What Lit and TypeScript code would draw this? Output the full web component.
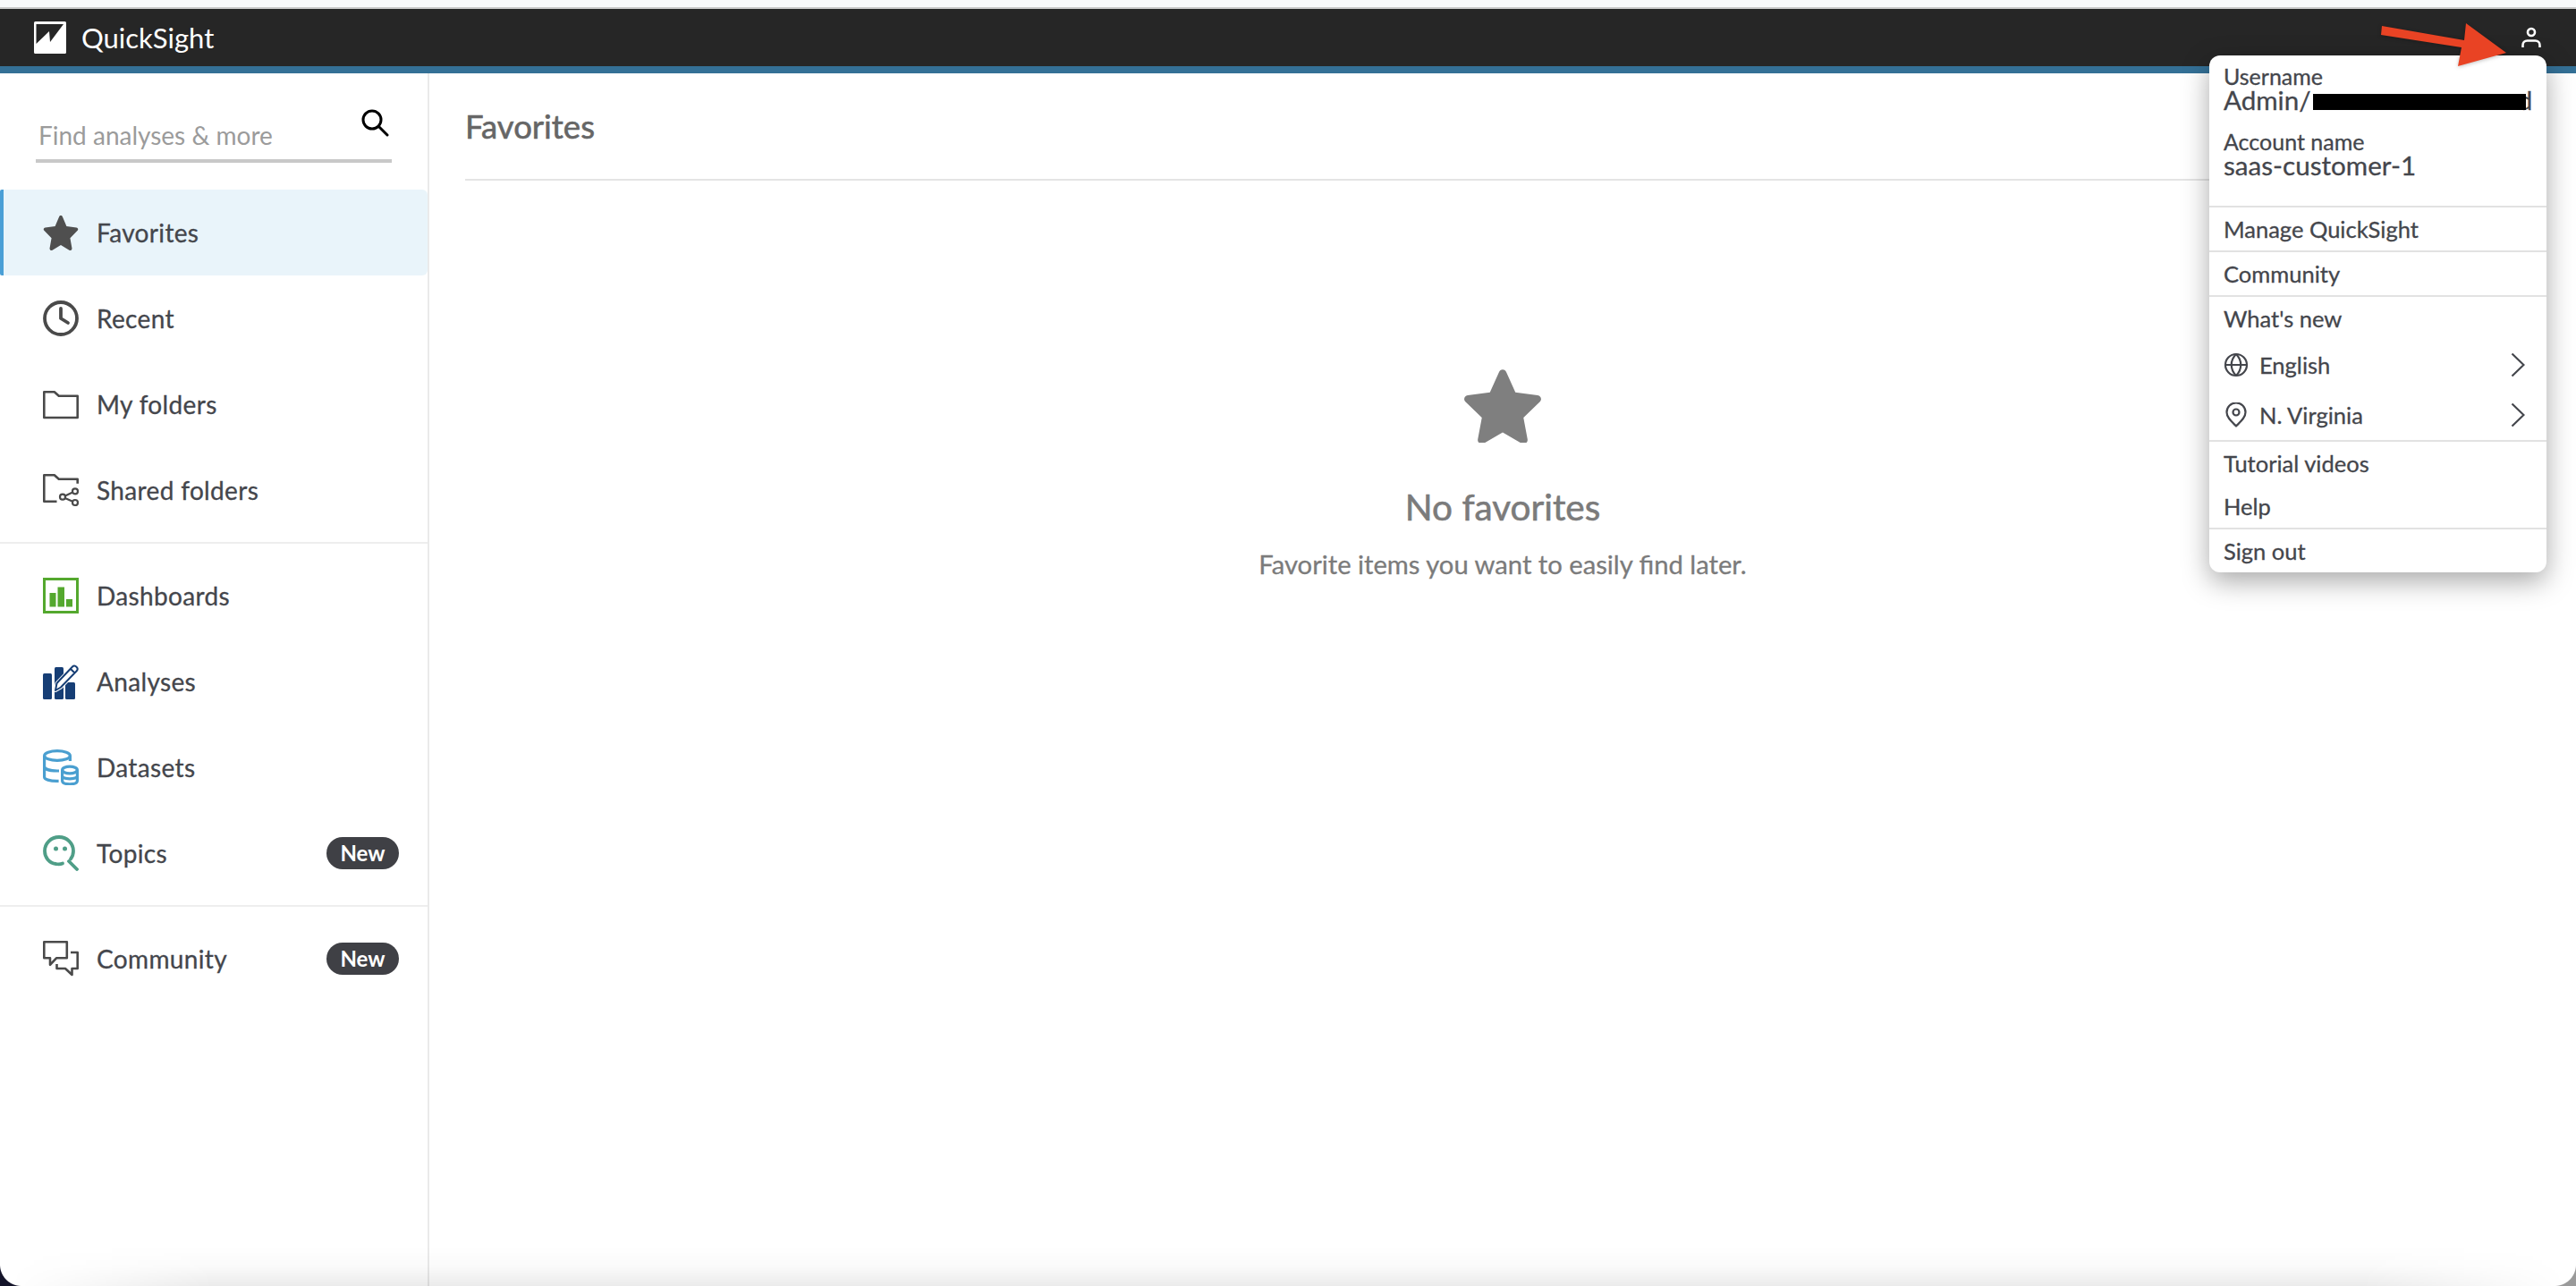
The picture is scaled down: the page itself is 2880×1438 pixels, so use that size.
import { LitElement, html, css, svg } from "lit";
import { customElement } from "lit/decorators.js";

const star = svg`<path d="M12 1.2c.5 0 .9.3 1.1.8l2.7 6.3 6.6.9c1 .1 1.4 1.3.7 2l-4.9 5 1.2 6.7c.2 1-.9 1.8-1.8 1.3L12 20.8l-5.6 3.4c-.9.5-2-.3-1.8-1.3l1.2-6.7-4.9-5c-.7-.7-.3-1.9.7-2l6.6-.9L10.9 2c.2-.5.6-.8 1.1-.8z"/>`;

const icons: Record<string, unknown> = {
  star: html`<svg viewBox="0.8 0.6 22.4 23.8" fill="#4f4f4f">${star}</svg>`,
  clock: html`<svg viewBox="0 0 40 40" fill="none" stroke="#4a4a4a" stroke-width="3.8"><circle cx="20" cy="20" r="18"/><path d="M20 9v11l8 5" stroke-linecap="round" stroke-linejoin="round"/></svg>`,
  folder: html`<svg viewBox="0 0 40 40" fill="none" stroke="#4a4a4a" stroke-width="2.6"><path d="M1.3 35V6.3h11.5l5 4.5h20.9V35z" stroke-linejoin="round"/></svg>`,
  shared: html`<svg viewBox="0 0 40 40" fill="none" stroke="#4a4a4a" stroke-width="2.6"><path d="M15.5 32.7H1.3V3.3h11.5l5 4.5h20.9v5" stroke-linejoin="round"/><circle cx="22" cy="27.7" r="3" stroke-width="2.2"/><circle cx="36" cy="21.3" r="3" stroke-width="2.2"/><circle cx="36" cy="34" r="3" stroke-width="2.2"/><path d="M24.8 26.4l8.4-3.9M24.8 29l8.4 3.7" stroke-width="2.2"/></svg>`,
  dash: html`<svg viewBox="0 0 40 40"><rect x="1.5" y="1.5" width="37" height="37" fill="none" stroke="#54a82e" stroke-width="3"/><path fill="#54a82e" d="M7.5 17h7v15.5h-7zM16.5 10.5H24v22h-7.5zM26 24h7v8.500h-7z"/></svg>`,
  analyses: html`<svg viewBox="0 0 40 40"><g fill="#163e75"><rect x="0" y="11" width="10" height="29" rx="1.5"/><rect x="13" y="4" width="10" height="36" rx="1.5"/><rect x="25" y="21" width="11" height="19" rx="1.5"/></g><path d="M14 30l1.5-8L33 3.500c1.300-1.300 3-1.300 4.500.2s1.500 3.200.2 4.500L20 26.500z" fill="#fff" stroke="#fff" stroke-width="4" stroke-linejoin="round"/><path d="M14 30l1.5-8L33 3.500c1.300-1.300 3-1.300 4.500.2s1.500 3.200.2 4.500L20 26.500zM31 6l5 5" fill="#fff" stroke="#163e75" stroke-width="2" stroke-linejoin="round"/></svg>`,
  datasets: html`<svg viewBox="0 0 40 40" fill="none" stroke="#4a9fd0" stroke-width="3.2"><ellipse cx="16" cy="7" rx="14.4" ry="5.4"/><path d="M30.4 7v6M1.6 7v24c0 2.5 6 4.4 14 4.4h2M1.600 19c0 3 6 5 14.400 5h2"/><ellipse cx="30" cy="23" rx="8.4" ry="3.8"/><path d="M21.6 23v12c0 2.5 4 3.800 8.400 3.800s8.400-1.300 8.400-3.800V23M21.600 29.500c0 2 4 3.300 8.400 3.300s8.400-1.300 8.400-3.300"/></svg>`,
  topics: html`<svg viewBox="0 0 40 40" fill="none" stroke="#4f9e87" stroke-width="3.8"><path d="M22 31.500c-2.500 1-5 1-7.500.5C7 31 2 25 2 17.500 2 9 9 2 18 2s16 7 16 15.500c0 3.500-1 6.500-3 9" stroke-linecap="round"/><path d="M29 29l9 9" stroke-linecap="round"/><circle cx="14.500" cy="15" r="2.500" fill="#4f9e87" stroke="none"/><circle cx="24.500" cy="15" r="2.500" fill="#4f9e87" stroke="none"/></svg>`,
  community: html`<svg viewBox="0 0 40 40" fill="none" stroke="#4a4a4a" stroke-width="2.6" stroke-linejoin="round"><path d="M1.300 1.300h25.500v18H15l-7 7.500v-7.500H1.300z"/><path d="M31 13h7.700v18H32.500v7L25 31H15.500v-5"/></svg>`,
  globe: html`<svg viewBox="0 0 28 28" fill="none" stroke="#44464c" stroke-width="2.2"><circle cx="14" cy="14" r="12"/><path d="M2 14h24M14 2c-7 7-7 17 0 24M14 2c7 7 7 17 0 24"/></svg>`,
  pin: html`<svg viewBox="0 0 28 28" fill="none" stroke="#44464c" stroke-width="2.2"><path d="M14 26.500C9 21.500 3.500 17 3.500 11a10.500 10.500 0 0 1 21 0c0 6-5.500 10.500-10.500 15.500z" stroke-linejoin="round"/><circle cx="14" cy="11" r="3.500"/></svg>`,
  chevron: html`<svg viewBox="0 0 16 28" fill="none" stroke="#44464c" stroke-width="2.2"><path d="M1.500 1.500L14.500 14 1.500 26.500"/></svg>`,
};

const navGroups = [
  [
    { label: "Favorites", icon: "star", active: true },
    { label: "Recent", icon: "clock" },
    { label: "My folders", icon: "folder" },
    { label: "Shared folders", icon: "shared" },
  ],
  [
    { label: "Dashboards", icon: "dash" },
    { label: "Analyses", icon: "analyses" },
    { label: "Datasets", icon: "datasets" },
    { label: "Topics", icon: "topics", badge: true },
  ],
  [{ label: "Community", icon: "community", badge: true }],
];

@customElement("app-root")
export class AppRoot extends LitElement {
  static styles = css`
    :host {
      display: block;
      height: 1438px;
      font-family: "Lato", sans-serif;
      color: #44464c;
      background: #fff;
      overflow: hidden;
      position: relative;
      -webkit-text-stroke: 0.3px;
    }
    .chrome {
      background: #f8f9fa;
      border-bottom: 2px solid #c9c9c9;
      box-sizing: border-box;
      height: 10px;
    }
    .topbar {
      height: 64px;
      background: #262626;
      display: flex;
      align-items: center;
      padding-left: 38px;
      color: #fff;
      border-bottom: 8px solid #347096;
    }
    .topbar .logo {
      width: 36px;
      height: 36px;
      margin-right: 17px;
    }
    .brand {
      font-size: 31px;
      -webkit-text-stroke: 0;
    }
    .user {
      width: 22px;
      height: 24px;
      margin-left: auto;
      margin-right: 39px;
    }
    .layout {
      display: flex;
      height: 1356px;
    }
    .side {
      width: 478px;
      flex: none;
      border-right: 2px solid #eaeaea;
    }
    .search {
      margin: 28px 40px 30px 40px;
      height: 68px;
      border-bottom: 4px solid #c8c8c8;
      display: flex;
      justify-content: space-between;
    }
    .search span {
      font-size: 28px;
      color: #9b9b9b;
      margin: 21px 0 0 3px;
      line-height: 40px;
      -webkit-text-stroke: 0;
    }
    .search svg {
      width: 32px;
      height: 32px;
      margin: 11px 3px 0 0;
    }
    .group {
      padding-bottom: 10px;
      border-bottom: 2px solid #eeeeee;
    }
    .group:last-child {
      border-bottom: none;
    }
    .group + .group {
      padding-top: 10px;
    }
    .item {
      height: 96px;
      display: flex;
      align-items: center;
      padding-left: 48px;
      padding-right: 32px;
      font-size: 28px;
      letter-spacing: 0.35px;
      color: #44464c;
      box-sizing: border-box;
    }
    .item.active {
      background: #e9f4fa;
      border-left: 4px solid #4a9fd6;
      padding-left: 44px;
      border-radius: 2px 6px 6px 2px;
    }
    .item svg {
      width: 40px;
      height: 40px;
      margin-right: 20px;
      flex: none;
    }
    .badge {
      margin-left: auto;
      background: #3f4045;
      color: #fff;
      font-size: 24px;
      font-weight: 700;
      height: 36px;
      width: 81px;
      padding-bottom: 2px;
      box-sizing: border-box;
      border-radius: 18px;
      display: flex;
      align-items: center;
      justify-content: center;
      letter-spacing: 0;
      -webkit-text-stroke: 0;
    }
    .main {
      flex: 1;
      padding: 0 40px;
    }
    .head {
      height: 118px;
      border-bottom: 2px solid #e4e4e4;
    }
    .head h2 {
      display: inline-block;
      margin: 0;
      font-weight: 400;
      font-size: 36.5px;
      color: #666;
      line-height: 118px;
      -webkit-text-stroke: 0.6px;
    }
    .empty {
      display: flex;
      flex-direction: column;
      align-items: center;
      margin-top: 207px;
      color: #7b7b7b;
    }
    .empty svg {
      width: 90px;
      height: 86px;
    }
    .empty h3 {
      margin: 47px 0 0;
      font-size: 40.5px;
      font-weight: 400;
      line-height: 50px;
      -webkit-text-stroke: 0.6px;
    }
    .empty p {
      margin: 19px 0 0;
      font-size: 29.2px;
      line-height: 40px;
    }
    .menu {
      position: absolute;
      left: 2470px;
      top: 62px;
      width: 377px;
      height: 578px;
      background: #fff;
      border-radius: 12px;
      box-shadow: 0 10px 30px rgba(0, 0, 0, 0.34);
      font-size: 25.5px;
      color: #44464c;
    }
    .info {
      padding: 9px 16px 0;
      height: 170px;
      box-sizing: border-box;
      border-bottom: 2px solid #e2e2e2;
      position: relative;
    }
    .info .k {
      font-size: 25px;
      line-height: 28px;
    }
    .info .v {
      font-size: 29.6px;
      line-height: 26px;
      margin-bottom: 19px;
      white-space: nowrap;
    }
    .gap {
      display: inline-block;
      width: 231px;
    }
    .redact {
      position: absolute;
      left: 116px;
      top: 43px;
      width: 238px;
      height: 18px;
      background: #000;
    }
    .row {
      padding: 0 16px;
      display: flex;
      align-items: center;
      box-sizing: border-box;
    }
    .row.h50 {
      height: 50px;
      border-bottom: 2px solid #e2e2e2;
    }
    .row.plain {
      height: 48px;
    }
    .row.lang {
      height: 56px;
    }
    .row.plain.sep {
      height: 50px;
      border-bottom: 2px solid #e2e2e2;
    }
    .row.lang.sep {
      height: 58px;
      border-bottom: 2px solid #e2e2e2;
    }
    .ico {
      width: 28px;
      height: 28px;
      margin-right: 12px;
    }
    .chev {
      width: 16px;
      height: 28px;
      margin-left: auto;
      margin-right: 8px;
    }
    .ico svg,
    .chev svg {
      display: block;
      width: 100%;
      height: 100%;
    }
    .arrow {
      position: absolute;
      left: 2650px;
      top: 20px;
      width: 160px;
      height: 60px;
      filter: drop-shadow(0 1px 2px rgba(0, 0, 0, 0.25));
    }
    .fade {
      position: absolute;
      left: 0;
      right: 0;
      bottom: 0;
      height: 44px;
      background: linear-gradient(to bottom, rgba(0, 0, 0, 0), rgba(0, 0, 0, 0.02) 50%, rgba(0, 0, 0, 0.08));
      -webkit-mask-image: linear-gradient(to right, transparent 10px, #000 240px, #000 calc(100% - 240px), transparent calc(100% - 10px));
      mask-image: linear-gradient(to right, transparent 10px, #000 240px, #000 calc(100% - 240px), transparent calc(100% - 10px));
    }
    .corner {
      position: absolute;
      bottom: 0;
      width: 24px;
      height: 24px;
    }
    .corner.l {
      left: 0;
      background: radial-gradient(circle at top right, transparent 23.5px, #14142a 24.5px);
    }
    .corner.r {
      right: 0;
      background: radial-gradient(circle at top left, transparent 23.5px, #9a9a9a 24.5px);
    }
  `;

  renderNavItem(it: { label: string; icon: string; active?: boolean; badge?: boolean }) {
    return html`<div class="item ${it.active ? "active" : ""}">
      ${icons[it.icon]}<span>${it.label}</span>
      ${it.badge ? html`<span class="badge">New</span>` : ""}
    </div>`;
  }

  render() {
    return html`
      <div class="chrome"></div>
      <div class="topbar">
        <svg class="logo" viewBox="0 0 36 36"><path fill="#fff" fill-rule="evenodd" d="M1.5 0h33A1.5 1.5 0 0 1 36 1.5v33a1.5 1.5 0 0 1-1.5 1.5h-33A1.5 1.5 0 0 1 0 34.5v-33A1.5 1.5 0 0 1 1.5 0zM2.500 3v22l14.500-14 1 12L33 3z"/></svg>
        <span class="brand">QuickSight</span>
        <svg class="user" viewBox="0 0 22 24" fill="none" stroke="#fff" stroke-width="2.6"><circle cx="11" cy="6" r="4"/><path d="M1.5 23v-2.5c0-3 2-5 5-5h9c3 0 5 2 5 5V23"/></svg>
      </div>
      <div class="layout">
        <div class="side">
          <div class="search">
            <span>Find analyses &amp; more</span>
            <svg viewBox="0 0 32 32" fill="none" stroke="#000" stroke-width="3"><circle cx="13" cy="13" r="10"/><path d="M20.5 20.5L30 30" stroke-linecap="round"/></svg>
          </div>
          ${navGroups.map(
            (g) => html`<div class="group">${g.map((it) => this.renderNavItem(it))}</div>`
          )}
        </div>
        <div class="main">
          <div class="head"><h2>Favorites</h2></div>
          <div class="empty">
            <svg viewBox="0 0 24 24" preserveAspectRatio="none" fill="#7f7f7f">${star}</svg>
            <h3>No favorites</h3>
            <p>Favorite items you want to easily find later.</p>
          </div>
        </div>
      </div>
      <div class="menu">
        <div class="info">
          <div class="k">Username</div>
          <div class="v">Admin/<span class="gap"></span>d</div>
          <div class="redact"></div>
          <div class="k">Account name</div>
          <div class="v">saas-customer-1</div>
        </div>
        <div class="row h50">Manage QuickSight</div>
        <div class="row h50">Community</div>
        <div class="row plain">What's new</div>
        <div class="row lang"><span class="ico">${icons.globe}</span>English<span class="chev">${icons.chevron}</span></div>
        <div class="row lang sep"><span class="ico">${icons.pin}</span>N. Virginia<span class="chev">${icons.chevron}</span></div>
        <div class="row plain">Tutorial videos</div>
        <div class="row plain sep">Help</div>
        <div class="row plain">Sign out</div>
      </div>
      <svg class="arrow" viewBox="0 0 160 60"><path fill="#e94324" d="M13 9l92 16 2-19 45 33-54 15 4-21-90-14z"/></svg>
      <div class="fade"></div>
      <div class="corner l"></div>
      <div class="corner r"></div>
    `;
  }
}
